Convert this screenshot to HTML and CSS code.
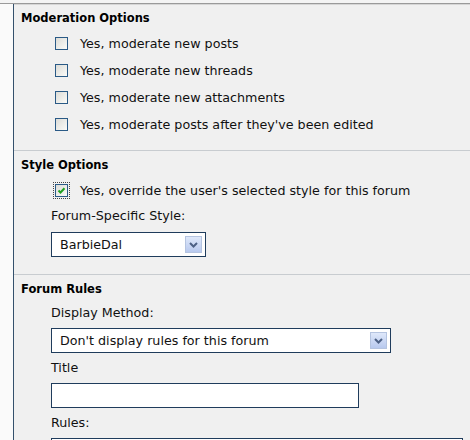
FILE: index.html
```html
<html lang="en"><head>
<meta charset="UTF-8">
<title>Forum Options</title>
<link rel="stylesheet" href="styles.css">
</head>
<body>
<div class="tabs"></div>
<div class="page">
<div class="side"></div>
<div class="panel">

<div class="section">
<h3>Moderation Options</h3>
<div class="checks">
<div class="check"><span class="box"></span>Yes, moderate new posts</div>
<div class="check"><span class="box"></span>Yes, moderate new threads</div>
<div class="check"><span class="box"></span>Yes, moderate new attachments</div>
<div class="check"><span class="box"></span>Yes, moderate posts after they've been edited</div>
</div>
</div>

<div class="section">
<h3>Style Options</h3>
<div class="checks">
<div class="check"><span class="box checked"><svg width="9" height="9" viewBox="0 0 9 9"><path d="M1.5 4.5 L3.5 6.5 L7.5 2.2" fill="none" stroke="#21a121" stroke-width="2"/></svg></span>Yes, override the user's selected style for this forum</div>
</div>
<div class="field">
<div class="label">Forum-Specific Style:</div>
<div class="select small"><span>BarbieDal</span><span class="arrow"><svg width="9" height="6" viewBox="0 0 9 6"><path d="M1 1 L4.5 4.5 L8 1" fill="none" stroke="#4d6185" stroke-width="2"/></svg></span></div>
</div>
</div>

<div class="section rules">
<h3>Forum Rules</h3>
<div class="field">
<div class="label">Display Method:</div>
<div class="select wide"><span>Don't display rules for this forum</span><span class="arrow"><svg width="9" height="6" viewBox="0 0 9 6"><path d="M1 1 L4.5 4.5 L8 1" fill="none" stroke="#4d6185" stroke-width="2"/></svg></span></div>
</div>
<div class="field">
<div class="label">Title</div>
<div class="input"></div>
</div>
<div class="field">
<div class="label">Rules:</div>
<div class="textarea"></div>
</div>
</div>

</div>
</div>
</body></html>
```

FILE: styles.css
```css
body {
    margin: 0;
    background: #f0f0f0;
    font-family: "DejaVu Sans", Verdana, sans-serif;
    font-size: 12.7px;
    color: #111;
    overflow: hidden;
}

.tabs {
    height: 3px;
    background: #f4f4f4;
    border-bottom: 1px solid #9a9a9a;
    box-shadow: 0 1px 0 #d6d6d6;
}

.page {
    display: flex;
    height: 436px;
}

.side {
    width: 13px;
    background: #fafafa;
    border-right: 1px solid #34506c;
}

.panel {
    flex: 1;
    overflow: hidden;
}

.section {
    padding: 4px 0 12px 0;
    border-bottom: 1px solid #c8ccd0;
}

.section h3 {
    margin: 0;
    padding-left: 7px;
    font-size: 11.5px;
    line-height: 20px;
    font-weight: bold;
    color: #000;
}

.checks {
    margin-top: 2px;
}

.check {
    display: flex;
    align-items: center;
    height: 27px;
    padding-left: 41px;
}

.box {
    width: 11px;
    height: 11px;
    border: 1px solid #2a5a86;
    background: linear-gradient(135deg, #dcdcd7, #fbfbf8);
    margin-right: 12px;
    display: flex;
    align-items: center;
    justify-content: center;
}

.box.checked {
    outline: 1px dotted #444;
    outline-offset: 1px;
}

.field {
    padding-left: 37px;
    margin-bottom: 3px;
}

.rules .field:first-of-type {
    margin-top: 2px;
}

.label {
    line-height: 24px;
}

.select,
.input,
.textarea {
    margin-top: 3px;
    background: #fff;
    border: 1px solid #1f3c5c;
    box-sizing: border-box;
}

.select {
    height: 25px;
    display: flex;
    align-items: center;
    justify-content: space-between;
    padding: 0 3px 0 8px;
}

.select.small {
    width: 155px;
    margin-top: 4px;
    margin-bottom: 5px;
}

.select.wide {
    width: 340px;
}

.arrow {
    width: 17px;
    height: 17px;
    box-sizing: border-box;
    border: 1px solid #b5c4e0;
    background: linear-gradient(#dfe8fa, #b8c9ee);
    display: flex;
    align-items: center;
    justify-content: center;
}

.input {
    width: 308px;
    height: 25px;
}

.textarea {
    width: 412px;
    height: 60px;
}
```
